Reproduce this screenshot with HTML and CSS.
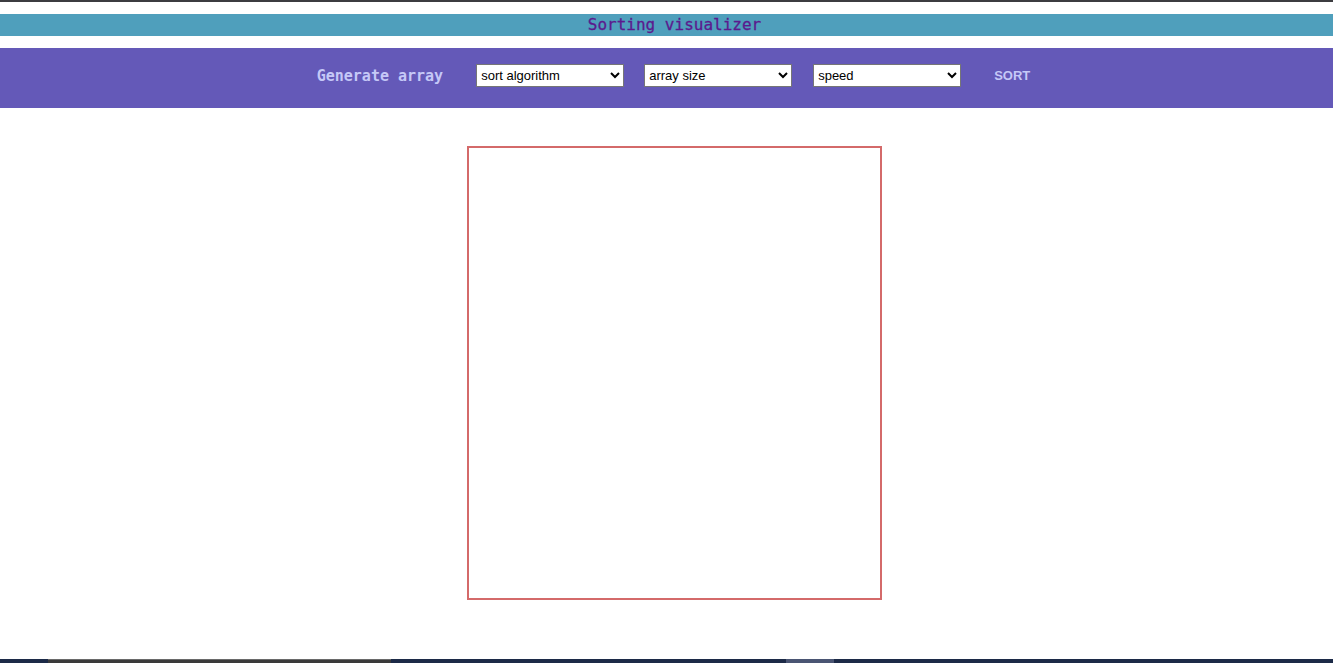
FILE: index.html
```html
<!DOCTYPE html>
<html>
<head>
<meta charset="utf-8">
<title>Sorting visualizer</title>
<link rel="stylesheet" href="styles.css">
</head>
<body>
<div class="topline"></div>
<header class="title-bar">
  <h1 class="title">Sorting visualizer</h1>
</header>
<nav class="controls">
  <button class="btn btn-generate">Generate array</button>
  <select class="ctl">
    <option>sort algorithm</option>
  </select>
  <select class="ctl">
    <option>array size</option>
  </select>
  <select class="ctl">
    <option>speed</option>
  </select>
  <button class="btn btn-sort">SORT</button>
</nav>
<main class="stage">
  <div class="canvas"></div>
</main>
<footer class="taskbar">
  <div class="seg seg-gap1"></div>
  <div class="seg seg-dark"></div>
  <div class="seg seg-gap2"></div>
  <div class="seg seg-light"></div>
</footer>
</body>
</html>
```
FILE: styles.css
```css
html, body {
  margin: 0;
  padding: 0;
  background: #ffffff;
  height: 663px;
  overflow: hidden;
}
.topline {
  height: 2px;
  background: #3c3c40;
}
.title-bar {
  margin-top: 12px;
  height: 22px;
  background: #4f9fbc;
  display: flex;
  align-items: center;
  justify-content: center;
}
.title {
  margin: 0;
  padding-left: 16px;
  font-family: "DejaVu Sans Mono", "Liberation Mono", monospace;
  font-size: 16px;
  font-weight: normal;
  -webkit-text-stroke: 0.3px #5b1a8e;
  color: #5b1a8e;
  line-height: 22px;
}
.controls {
  margin-top: 12px;
  height: 60px;
  background: #6459b8;
  display: flex;
  align-items: center;
  justify-content: center;
  padding-left: 14px;
  padding-bottom: 5px;
  box-sizing: border-box;
}
.btn {
  background: transparent;
  border: 0;
  padding: 0;
  cursor: pointer;
  color: #c5c8f7;
}
.btn-generate {
  font-family: "DejaVu Sans Mono", "Liberation Mono", monospace;
  font-weight: bold;
  font-size: 15px;
  margin-right: 33px;
}
.btn-sort {
  font-family: "Liberation Sans", Arial, sans-serif;
  font-weight: bold;
  font-size: 13px;
  margin-left: 33px;
}
.ctl {
  width: 148px;
  height: 23px;
  margin: 0;
  font-family: "Liberation Sans", Arial, sans-serif;
  font-size: 13px;
  color: #000;
  background: #fff;
  border: 1px solid #767676;
  border-radius: 0;
  padding: 0;
}
.ctl + .ctl {
  margin-left: 20px;
}
.ctl + .ctl + .ctl {
  margin-left: 21px;
}
.stage {
  display: flex;
  justify-content: center;
  padding-top: 38px;
  padding-left: 16px;
}
.canvas {
  width: 411px;
  height: 450px;
  border: 2px solid #d46a6a;
}
.taskbar {
  margin-top: 59px;
  height: 4px;
  background: #1c2a47;
  display: flex;
}
.seg-gap1 { width: 48px; }
.seg-dark {
  width: 343px;
  background: #3a3a3a;
  border-top: 1px solid #6a6a6a;
  box-sizing: border-box;
}
.seg-gap2 { width: 395px; }
.seg-light {
  width: 48px;
  background: #4a5573;
}
```
